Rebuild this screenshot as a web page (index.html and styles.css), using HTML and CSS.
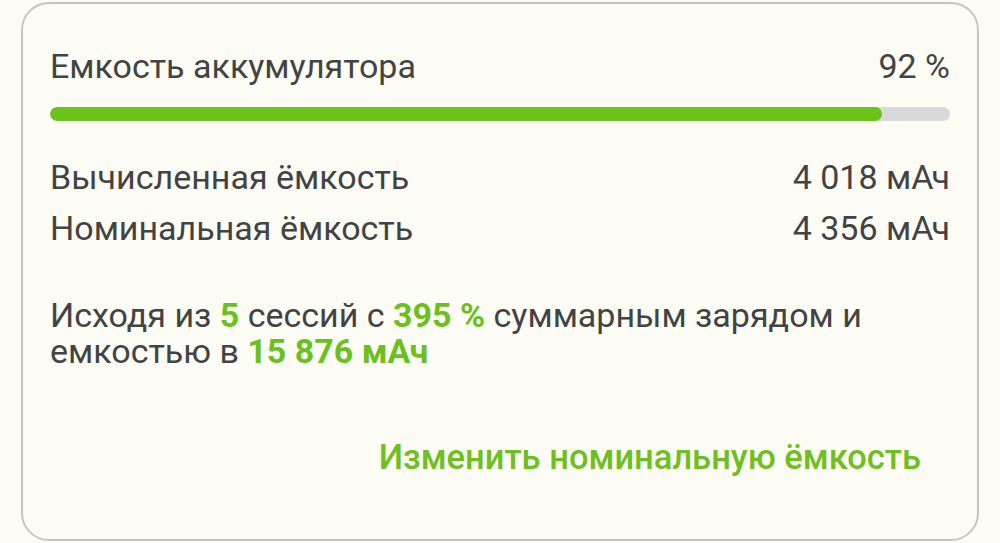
FILE: index.html
```html
<!DOCTYPE html>
<html lang="ru">
<head>
<meta charset="utf-8">
<link rel="stylesheet" href="styles.css">
</head>
<body>
<div class="card">
  <div class="row title">
    <span>Емкость аккумулятора</span>
    <span>92 %</span>
  </div>
  <div class="bar"><div class="fill" style="width: 92.4%"></div></div>
  <div class="rows">
    <div class="row"><span>Вычисленная ёмкость</span><span>4 018 мАч</span></div>
    <div class="row"><span>Номинальная ёмкость</span><span>4 356 мАч</span></div>
  </div>
  <p class="summary">Исходя из <b>5</b> сессий с <b>395 %</b> суммарным зарядом и емкостью в <b>15 876 мАч</b></p>
  <div class="actions"><span class="link">Изменить номинальную ёмкость</span></div>
</div>
</body>
</html>
```
FILE: styles.css
```css
html, body {
  margin: 0;
  padding: 0;
  background: #fcfcf4;
}
body {
  font-family: Roboto, "Noto Sans", sans-serif;
  color: #434343;
  font-size: 34px;
}
.card {
  box-sizing: border-box;
  margin: 2px 21px 0 21px;
  height: 539px;
  border: 2px solid #c6c6bf;
  border-radius: 28px;
  padding: 42px 27px 0 27px;
  background: #fcfcf4;
}
.row {
  display: flex;
  justify-content: space-between;
  line-height: 51px;
}
.title {
  line-height: 40px;
}
.bar {
  margin-top: 21px;
  height: 14px;
  border-radius: 7px;
  background: #d9d9d7;
  overflow: hidden;
}
.fill {
  height: 100%;
  border-radius: 7px;
  background: #6cc11b;
}
.rows {
  margin-top: 31px;
}
.summary {
  margin: 43px 0 0 0;
  line-height: 36px;
  padding-right: 20px;
}
.summary b {
  color: #6bbf1e;
  font-weight: 700;
}
.actions {
  display: flex;
  justify-content: flex-end;
  margin-top: 68px;
  padding-right: 29px;
}
.link {
  color: #6fbe22;
  font-size: 34.5px;
  font-weight: 500;
  line-height: 40px;
}
```
